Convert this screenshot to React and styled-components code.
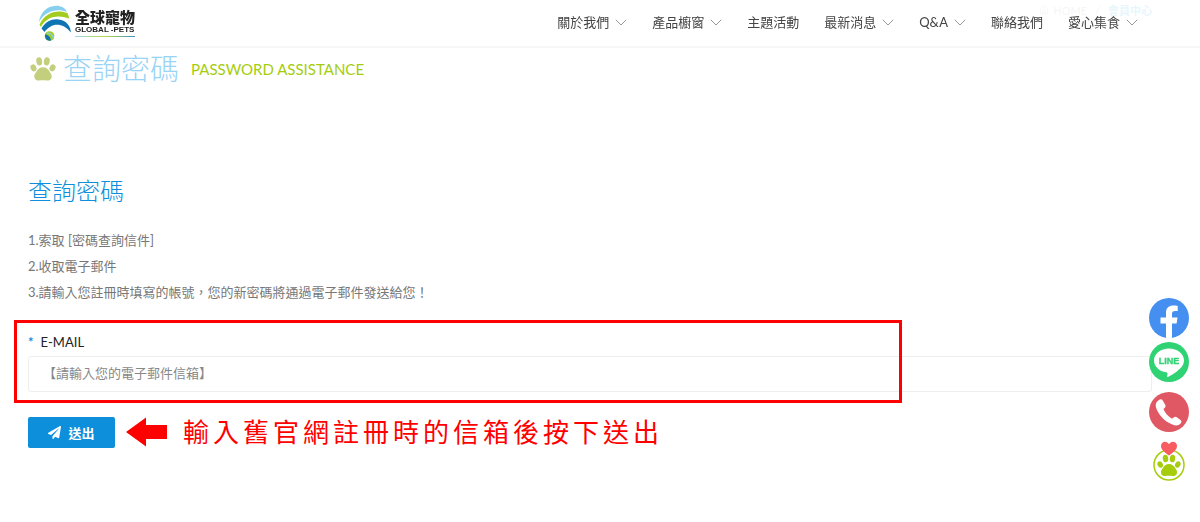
import React, { useState } from 'react';
import styled, { createGlobalStyle } from 'styled-components'
import { FaPaperPlane } from 'react-icons/fa'
import { House } from 'lucide-react'

const menu = [
    { text: '關於我們', sub: true },
    { text: '產品櫥窗', sub: true },
    { text: '主題活動' },
    { text: '最新消息', sub: true },
    { text: 'Q&A', sub: true },
    { text: '聯絡我們' },
    { text: '愛心集食', sub: true },
]

const steps = [
    '1.索取 [密碼查詢信件]',
    '2.收取電子郵件',
    '3.請輸入您註冊時填寫的帳號\uFF0C您的新密碼將通過電子郵件發送給您\uFF01',
]

const Chevron = () => (
    <svg width="12" height="7" viewBox="0 0 12 7" fill="none" stroke="#999" aria-hidden="true">
        <path d="M0.8 0.8 6 6 11.2 0.8" />
    </svg>
)

const Paw = ({ size, color }) => (
    <svg width={size} height={size} viewBox="0 0 24 24" fill={color} aria-hidden="true">
        <ellipse cx="3.2" cy="11" rx="2.6" ry="3.3" transform="rotate(-28 3.2 11)" />
        <ellipse cx="8.5" cy="5" rx="2.7" ry="3.8" transform="rotate(-8 8.5 5)" />
        <ellipse cx="15.5" cy="5" rx="2.7" ry="3.8" transform="rotate(8 15.5 5)" />
        <ellipse cx="20.8" cy="11" rx="2.6" ry="3.3" transform="rotate(28 20.8 11)" />
        <path d="M12 10.4c3 0 4.8 1.800 6 3.800 1.200 1.900 2.400 3 2 5.300-.4 2.300-2.400 3.300-4.500 3.100-1.300-.1-2.200-.3-3.500-.3s-2.200.2-3.500.3c-2.100.2-4.100-.8-4.500-3.100-.4-2.300.8-3.400 2-5.300 1.200-2 3-3.800 6-3.800z" />
    </svg>
)

const LogoMark = () => (
    <svg width="34" height="38" viewBox="0 0 34 38" aria-hidden="true">
        <path d="M1 18C2 9 9 2 18 1.800c5.500 0 9 2.200 11 6C19 4 7 7 1 18z" fill="#86cfee" />
        <path d="M1.500 20.500C7 8.500 19 5 29.500 9c.8 1.800 1.300 3.500 1.800 5.600C20 10.500 9 12 2.800 23z" fill="#a3cd1e" />
        <path d="M3.500 24.500C9 14.500 20 13 27.500 18c3 2.200 5 5.700 5.500 10.500C24 17.500 13 19 6.500 28z" fill="#0f74b2" />
        <circle cx="11.500" cy="32" r="4.800" fill="#a3cd1e" />
        <path d="M7 30.500c3 0 5.500 2.500 6 6-3.500 1-6.500-1.500-6-6z" fill="#0f74b2" />
        <path d="M8.500 28.800c4 0 7 3 7 6.500" fill="none" stroke="#86cfee" strokeWidth="1.300" />
    </svg>
)

const App = () => {
    const [email, setEmail] = useState('')

    return (<>
        <GlobalStyle />
        <Header>
            <Logo href="#">
                <LogoMark />
                <LogoText>
                    <LogoName>全球寵物</LogoName>
                    <LogoSub>GLOBAL -PETS</LogoSub>
                    <LogoLine />
                </LogoText>
            </Logo>
            <Nav>
                {menu.map(item => (
                    <NavLink href="#" key={item.text}>
                        {item.text}
                        {item.sub && <Chevron />}
                    </NavLink>
                ))}
            </Nav>
        </Header>

        <Main>
            <Breadcrumb>
                <Home href="#"><House size={10} />HOME</Home>
                <span>/</span>
                <Current href="#">會員中心</Current>
            </Breadcrumb>

            <PageTitle>
                <Paw size={26} color="#c3cf7d" />
                <TitleMain>查詢密碼</TitleMain>
                <TitleSub>PASSWORD ASSISTANCE</TitleSub>
            </PageTitle>

            <Heading>查詢密碼</Heading>
            <Steps>
                {steps.map(step => <li key={step}>{step}</li>)}
            </Steps>

            <form onSubmit={e => e.preventDefault()}>
                <FieldWrap>
                    <Label htmlFor="email"><Star>*</Star>E-MAIL</Label>
                    <Input
                        id="email" type="email" value={email}
                        onChange={e => setEmail(e.target.value)}
                        placeholder="【請輸入您的電子郵件信箱】" />
                    <Highlight />
                </FieldWrap>

                <Actions>
                    <Submit type="submit"><FaPaperPlane size={13} />送出</Submit>
                    <svg width="41" height="30" viewBox="0 0 41 30" fill="#f00" aria-hidden="true">
                        <path d="M0 15 20 0.500V8h21v14H20v7.500z" />
                    </svg>
                    <Hint>輸入舊官網註冊時的信箱後按下送出</Hint>
                </Actions>
            </form>
        </Main>

        <Floating>
            <RoundLink href="#" $bg="#458ff0" aria-label="Facebook">
                <svg width="40" height="40" viewBox="0 0 40 40" fill="#fff">
                    <path d="M17 39.800V25.500h-5.500v-6H17v-4.600c0-5 3-7.300 7.500-7.300 1.600 0 3.200.2 4.200.4v5h-2.600c-2.400 0-3.100 1.200-3.100 2.800v3.700h5.500l-.9 6H23v14.300a20 20 0 0 1-6 0z" />
                </svg>
            </RoundLink>
            <RoundLink href="#" $bg="#30d373" $gap="4px" aria-label="LINE">
                <svg width="40" height="40" viewBox="0 0 40 40">
                    <path d="M20 6.500c8.300 0 15 5.300 15 11.900 0 3-1.400 5.500-3.900 8.200C27.500 30.200 22 33.800 19 35c-.9.3-.9-.3-.8-1l.3-2c0-.8-.1-1.600-1.300-1.800C10.200 29.200 5 24.400 5 18.400 5 11.800 11.700 6.500 20 6.500z" fill="#fff" />
                    <text x="20" y="22" textAnchor="middle" fontSize="9" fontWeight="bold" fontFamily="Liberation Sans, sans-serif" fill="#30d373" stroke="#30d373" strokeWidth=".3">LINE</text>
                </svg>
            </RoundLink>
            <RoundLink href="#" $bg="#df5864" $gap="10px" aria-label="電話">
                <svg width="40" height="40" viewBox="0 0 40 40" fill="#fff">
                    <path d="M10.300 7.800c1.300-1 2.600-.7 3.400.6l2.500 4.300c.7 1.200.4 2.300-.6 3.200l-1.200 1.200c1.600 3.800 4.700 7.300 8.600 9.700l1.600-1.400c1-.8 2.100-.9 3.200-.1l3.700 2.700c1.200 1 1.300 2.200.3 3.300-2 2.200-4.700 2.900-7.800 1.500C15 29.200 9.500 23 7 15.500c-1-3.200.3-6 3.300-7.700z" />
                </svg>
            </RoundLink>
            <PetLink href="#" aria-label="愛心集食">
                <svg width="34" height="41" viewBox="0 0 34 41">
                    <circle cx="17" cy="24" r="15" fill="#fff" stroke="#a5cd0c" strokeWidth="1.500" />
                    <g transform="translate(5 12.500)">
                        <Paw size={24} color="#a5cd0c" />
                    </g>
                    <path d="M17 14.500C12 11 9 8.300 9 5c0-2.500 1.800-4.200 4-4.200 1.700 0 3.200 1 4 2.500.8-1.500 2.300-2.500 4-2.500 2.200 0 4 1.700 4 4.200 0 3.300-3 6-8 9.500z" fill="#f75c61" />
                </svg>
            </PetLink>
        </Floating>
    </>)
}


const GlobalStyle = createGlobalStyle`
    *{
        box-sizing: border-box;
    }
    body{
        margin: 0;
        background: #fff;
        color: #777;
        font-family: Lato, "Noto Sans CJK TC", sans-serif;
        font-size: 13px;
    }
    a{
        color: inherit;
        text-decoration: none;
    }
    svg{
        display: block;
        flex-shrink: 0;
    }
`

const Header = styled.header`
    position: fixed;
    top: 0;
    left: 0;
    right: 0;
    z-index: 10;
    height: 48px;
    padding: 0 62px 2px 38px;
    display: flex;
    justify-content: space-between;
    align-items: center;
    background: rgba(255,255,255,.88);
    border-bottom: 2px solid #f7f7f7;
`
const Logo = styled.a`
    display: flex;
    align-items: center;
    gap: 3px;
    padding-top: 2px;
    color: #222;
`
const LogoText = styled.span`
    display: flex;
    flex-direction: column;
`
const LogoName = styled.span`
    font-size: 15px;
    line-height: 16px;
    font-weight: 900;
`
const LogoSub = styled.span`
    font-family: "Liberation Sans", sans-serif;
    font-size: 8px;
    line-height: 10px;
    font-weight: bold;
`
const LogoLine = styled.span`
    height: 1px;
    margin-top: 1px;
    background: linear-gradient(90deg, #9bd8f0, #b9d84c 50%, #3a93c4);
`

const Nav = styled.nav`
    display: flex;
    gap: 25px;
`
const NavLink = styled.a`
    display: flex;
    align-items: center;
    gap: 6px;
    line-height: 20px;
    color: #444;
`

const Main = styled.main`
    padding: 0 48px 0 28px;
`
const Breadcrumb = styled.div`
    display: flex;
    justify-content: flex-end;
    align-items: center;
    gap: 8px;
    height: 20px;
    font-size: 11px;
    color: #aaa;
`
const Home = styled.a`
    display: flex;
    align-items: center;
    gap: 4px;
`
const Current = styled.a`
    font-weight: bold;
    color: #38ade6;
`

const PageTitle = styled.div`
    display: flex;
    align-items: center;
    margin-top: 28px;
    padding-left: 2px;
    height: 42px;
`
const TitleMain = styled.h1`
    margin: 0 12px 0 7px;
    font-size: 29px;
    line-height: 42px;
    font-weight: 300;
    color: #99d3f5;
`
const TitleSub = styled.span`
    font-size: 15px;
    line-height: 20px;
    color: #a5cd0c;
`

const Heading = styled.h2`
    margin: 83px 0 18px;
    font-size: 24px;
    line-height: 36px;
    font-weight: 300;
    color: #0e8fdb;
`
const Steps = styled.ul`
    list-style: none;
    margin: 0 0 27px;
    padding: 0;
    line-height: 26px;
`

const FieldWrap = styled.div`
    position: relative;
    display: flex;
    flex-direction: column;
`
const Label = styled.label`
    display: flex;
    gap: 7px;
    margin-bottom: 4px;
    line-height: 20px;
    color: #222;
`
const Star = styled.span`
    font-weight: bold;
    color: #0e8fdb;
`
const Input = styled.input`
    width: 100%;
    height: 36px;
    padding: 0 14px 3px;
    border: 1px solid #eee;
    border-radius: 3px;
    outline: none;
    font: inherit;
    color: #666;
    &::placeholder{
        color: #888;
        opacity: 1;
    }
`
/* red frame drawn over the field, a bit wider than its label */
const Highlight = styled.div`
    position: absolute;
    top: -12px;
    left: -14px;
    width: 79%;
    height: 83px;
    border: 3px solid #f00;
    pointer-events: none;
`

const Actions = styled.div`
    display: flex;
    align-items: center;
    margin-top: 22px;
    gap: 11px;
`
const Submit = styled.button`
    display: flex;
    justify-content: center;
    align-items: center;
    gap: 7px;
    width: 87px;
    height: 31px;
    padding: 0;
    border: none;
    border-radius: 2px;
    background: #0e8fdb;
    color: #fff;
    font: inherit;
    font-weight: bold;
    cursor: pointer;
`
const Hint = styled.strong`
    margin-left: 5px;
    font-size: 26px;
    line-height: 36px;
    font-weight: 400;
    letter-spacing: 4px;
    color: #f00;
`

const Floating = styled.aside`
    position: fixed;
    top: 298px;
    right: 11px;
    z-index: 20;
    display: flex;
    flex-direction: column;
    align-items: center;
`
const RoundLink = styled.a`
    width: 40px;
    height: 40px;
    margin-top: ${({ $gap }) => $gap || 0};
    border-radius: 50%;
    background: ${({ $bg }) => $bg};
`
const PetLink = styled.a`
    margin-top: 9px;
`

export default App;
